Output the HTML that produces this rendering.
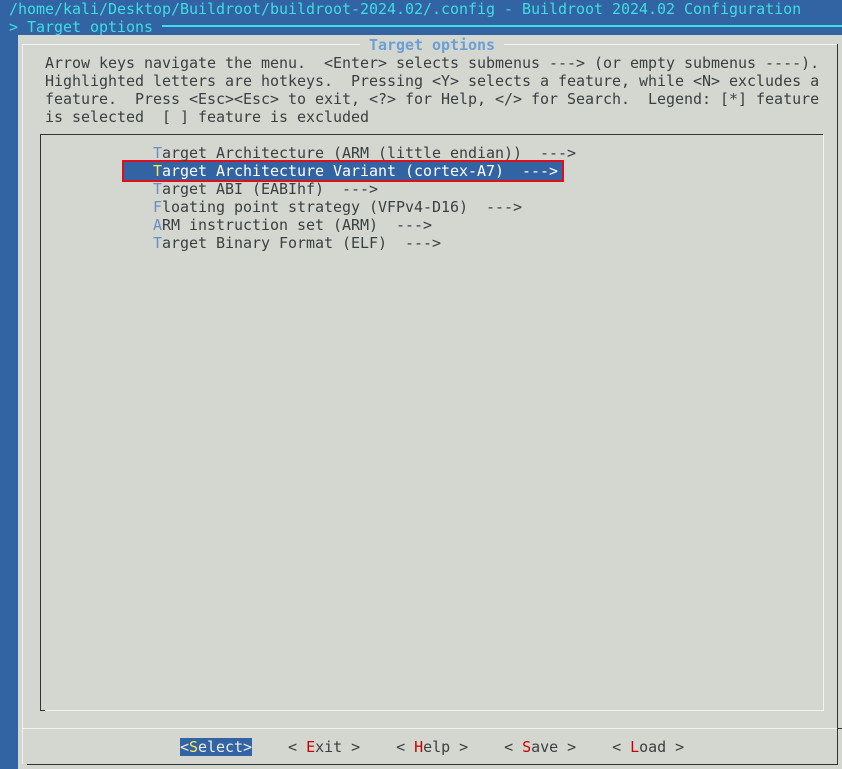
<!DOCTYPE html>
<html><head><meta charset="utf-8"><style>
html,body{margin:0;padding:0;}
body{width:842px;height:769px;background:#3263a3;position:relative;overflow:hidden;font-family:"DejaVu Sans Mono","Liberation Mono",monospace;font-size:15px;}
.t{position:absolute;white-space:pre;line-height:18px;letter-spacing:-0.03px;color:#3a3f41;}
.cy{color:#3fdde4;}
.dlg{position:absolute;left:18px;top:35px;width:824px;height:734px;background:#d3d7cf;}
.ln{position:absolute;}
.hk{color:#6c8ec6;}
.rd{color:#cc0000;}
</style></head><body>
<div class="t cy" style="left:9px;top:0">/home/kali/Desktop/Buildroot/buildroot-2024.02/.config - Buildroot 2024.02 Configuration</div>
<div class="t cy" style="left:9px;top:18px">&gt; Target options</div>
<div class="dlg"></div>
<div class="ln" style="left:162px;top:25px;width:680px;height:2px;background:#3fdde4;z-index:5"></div>
<div class="ln" style="left:22px;top:44px;width:816px;height:1px;background:#f2f2f0"></div>
<div class="ln" style="left:22px;top:44px;width:1px;height:720px;background:#f2f2f0"></div>
<div class="ln" style="left:837px;top:44px;width:1px;height:721px;background:#2e3436"></div>
<div class="ln" style="left:27px;top:764px;width:811px;height:1px;background:#2e3436"></div>
<div class="ln" style="left:22px;top:728px;width:816px;height:1px;background:#f2f2f0"></div>
<div class="ln" style="left:837px;top:728px;width:5px;height:1px;background:#2e3436"></div>
<div class="t" style="left:360px;top:36px;background:#d3d7cf;color:#6c9fd4;font-weight:bold;padding:0 9px">Target options</div>
<div class="t" style="left:45px;top:54px">Arrow keys navigate the menu.  &lt;Enter&gt; selects submenus ---&gt; (or empty submenus ----).
Highlighted letters are hotkeys.  Pressing &lt;Y&gt; selects a feature, while &lt;N&gt; excludes a
feature.  Press &lt;Esc&gt;&lt;Esc&gt; to exit, &lt;?&gt; for Help, &lt;/&gt; for Search.  Legend: [*] feature
is selected  [ ] feature is excluded</div>
<div class="ln" style="left:40px;top:134px;width:784px;height:1px;background:#2e3436"></div>
<div class="ln" style="left:40px;top:134px;width:1px;height:577px;background:#2e3436"></div>
<div class="ln" style="left:823px;top:134px;width:1px;height:577px;background:#f2f2f0"></div>
<div class="ln" style="left:45px;top:710px;width:779px;height:1px;background:#f2f2f0"></div>
<div class="ln" style="left:40px;top:710px;width:5px;height:1px;background:#2e3436"></div>
<div class="ln" style="left:124px;top:162px;width:438px;height:18px;background:#3263a3"></div>
<div class="ln" style="left:123px;top:161px;width:438px;height:18px;border:2px solid #e0101a;box-sizing:content-box;margin:-1px 0 0 -1px"></div>
<div class="t" style="left:153px;top:144px"><span class="hk">T</span>arget Architecture (ARM (little endian))  ---&gt;
<span style="color:#fff"><span style="color:#fce94f">T</span>arget Architecture Variant (cortex-A7)  ---&gt;</span>
<span class="hk">T</span>arget ABI (EABIhf)  ---&gt;
<span class="hk">F</span>loating point strategy (VFPv4-D16)  ---&gt;
<span class="hk">A</span>RM instruction set (ARM)  ---&gt;
<span class="hk">T</span>arget Binary Format (ELF)  ---&gt;</div>
<div class="t" style="left:180px;top:738px"><span style="background:#3263a3;color:#eeeeec">&lt;<span style="color:#fce94f">S</span>elect&gt;</span>    &lt; <span class="rd">E</span>xit &gt;    &lt; <span class="rd">H</span>elp &gt;    &lt; <span class="rd">S</span>ave &gt;    &lt; <span class="rd">L</span>oad &gt;</div>
</body></html>
